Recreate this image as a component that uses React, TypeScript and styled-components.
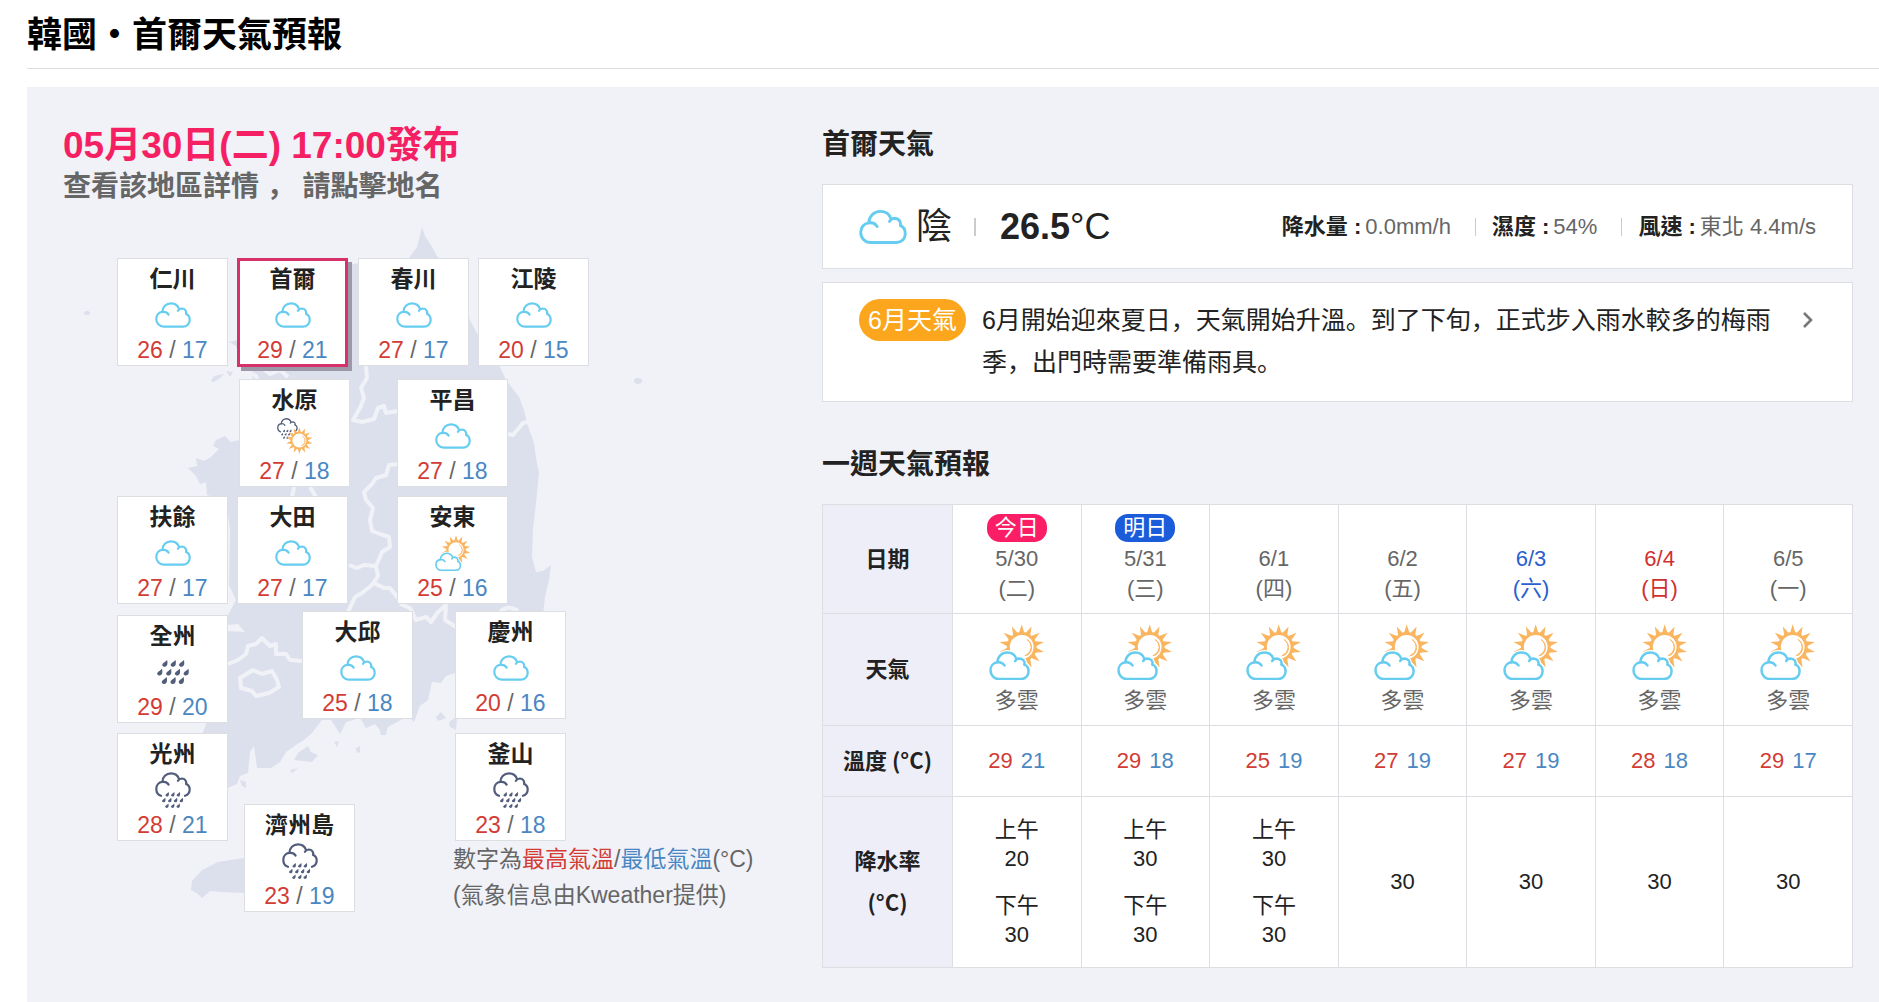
import React, { useState } from "react";
import styled, { createGlobalStyle } from "styled-components";

const GlobalStyle = createGlobalStyle`
  *, *::before, *::after { box-sizing: border-box; }
  body {
    margin: 0;
    background: #fff;
    color: #222;
    font-family: "Liberation Sans", Arial, "Noto Sans CJK TC", sans-serif;
    font-size: 22px;
    line-height: 30px;
  }
  h1, h2, h3, p, dl, dd, figure { margin: 0; }
  button { font: inherit; color: inherit; }
`;

const HIGH = "#d23c35";
const LOW = "#4a87c2";
const LINE = "#dcdee2";

const Page = styled.main`
  padding-left: 27px;
`;

const PageTitle = styled.h1`
  padding: 10px 0 14px;
  border-bottom: 1px solid ${LINE};
  margin-bottom: 18px;
  color: #000;
  font-family: "Noto Sans CJK TC", sans-serif;
  font-size: 35px;
  line-height: 44px;
`;

const Panel = styled.section`
  display: grid;
  grid-template-columns: 759px minmax(0, 1fr);
  padding: 36px 26px 77px 36px;
  background: #f1f2f8;
`;

const Issued = styled.h2`
  color: #f51f64;
  font-size: 37px;
  line-height: 46px;
`;

const Hint = styled.p`
  color: #666;
  font-family: "Liberation Sans", Arial, "Noto Sans CJK SC", sans-serif;
  font-size: 28px;
  font-weight: bold;
  line-height: 36px;
`;

const MapCanvas = styled.figure`
  position: relative;
  width: 696px;
  height: 720px;
`;

const MapDrawing = styled.svg`
  position: absolute;
  inset: 0;
  width: 100%;
  height: 100%;
`;

const CityCard = styled.button<{ $x: number; $y: number; $on: boolean }>`
  position: absolute;
  left: ${(p) => p.$x}px;
  top: ${(p) => p.$y}px;
  display: flex;
  flex-direction: column;
  align-items: center;
  gap: 4px;
  width: 111px;
  height: ${(p) => (p.$on ? 109 : 108)}px;
  padding: 6px 0 0;
  border: 1px solid ${LINE};
  background: #fff;
  cursor: pointer;
  ${(p) =>
    p.$on &&
    `padding-top: 4px;
     border: 3px solid #d63269;
     box-shadow: 4px 4px 0 #9c98aa;`}
`;

const CityName = styled.strong`
  font-size: 23px;
  line-height: 28px;
`;

const CityTemps = styled.span`
  color: #666;
  font-size: 23px;
  line-height: 26px;
`;

const High = styled.span`
  color: ${HIGH};
`;

const Low = styled.span`
  color: ${LOW};
`;

const MapNote = styled.figcaption`
  position: absolute;
  left: 390px;
  top: 636px;
  color: #666;
  font-size: 23px;
  line-height: 36px;
  white-space: nowrap;
`;

const Details = styled.div`
  display: flex;
  flex-direction: column;
`;

const SectionTitle = styled.h2`
  margin-bottom: 17px;
  font-size: 28px;
  line-height: 44px;
`;

const NowBox = styled.div`
  display: flex;
  align-items: center;
  height: 85px;
  padding: 0 36px;
  border: 1px solid ${LINE};
  background: #fff;
`;

const Sky = styled.span`
  margin-left: 9px;
  font-size: 36px;
  line-height: 44px;
`;

const Divider = styled.span`
  width: 2px;
  height: 18px;
  margin: 0 24px 0 22px;
  background: #ccc;
`;

const NowTemp = styled.span`
  font-size: 36px;
  line-height: 44px;
`;

const Facts = styled.dl`
  display: flex;
  align-items: center;
  margin-left: auto;
  font-size: 22px;
`;

const Fact = styled.div`
  display: flex;
  gap: 4px;
  white-space: nowrap;

  & + & {
    margin-left: 24px;
    padding-left: 17px;
    background: linear-gradient(#ccc, #ccc) left center / 1px 18px no-repeat;
  }
  dt { font-weight: bold; }
  dd { color: #666; }
`;

const SeasonLink = styled.a`
  display: flex;
  align-items: flex-start;
  margin: 13px 0 41px;
  padding: 16px 36px 18px;
  border: 1px solid ${LINE};
  background: #fff;
  color: #222;
  font-size: 25px;
  line-height: 42px;
  text-decoration: none;
`;

const SeasonTag = styled.span`
  flex: none;
  padding: 0 9px;
  border-radius: 21px;
  background: #fba61c;
  color: #fff;
`;

const SeasonText = styled.span`
  flex: 1;
  margin: 0 16px;
  font-family: "Liberation Sans", Arial, "Noto Sans CJK SC", sans-serif;
`;

const Chevron = styled.svg`
  flex: none;
  width: 16px;
  height: 42px;
`;

const Week = styled.table`
  width: 100%;
  border-collapse: collapse;
  table-layout: fixed;
  text-align: center;

  th, td {
    padding: 0;
    border: 1px solid ${LINE};
  }
  th {
    padding-bottom: 5px;
    background: #eeeef8;
    font-family: "Noto Sans CJK TC", sans-serif;
    line-height: 42px;
  }
  td { background: #fff; }
`;

const HeadCol = styled.col`
  width: 130px;
`;

const Row = styled.tr<{ $h: number }>`
  height: ${(p) => p.$h}px;
`;

const DayCell = styled.td<{ $tone?: "sat" | "sun" }>`
  color: ${(p) => (p.$tone === "sat" ? "#2a5fce" : p.$tone === "sun" ? "#d02f2f" : "#666")};
`;

const DayTag = styled.span<{ $color?: string }>`
  display: block;
  width: 60px;
  height: 28px;
  margin: 0 auto 2px;
  border-radius: 13px;
  background: ${(p) => p.$color ?? "transparent"};
  color: #fff;
  line-height: 28px;
`;

const Line = styled.span`
  display: block;
`;

const SkyCell = styled.td`
  color: #666;

  svg { display: block; margin: 0 auto 6px; }
`;

const WeekTemps = styled.span`
  display: flex;
  justify-content: center;
  gap: 8px;
`;

const Half = styled.span`
  display: block;
  line-height: 29px;

  & + & { margin-top: 18px; }
`;

const BLUE = "#67cdf0";
const NAVY = "#525d7c";
const ORANGE = "#f9b55f";

const CLOUD_TOP =
  "M13.6 12.6C12.2 10.4 9.9 9.5 7.4 9.9C7.4 5 11.2 1.3 16 1.3C20 1.3 22.9 3.6 24 6.9M22.9 8.8C23.8 7.2 25.2 6.5 26.9 6.5C29.8 6.6 31.6 8.9 31.2 12";
const CLOUD_BODY =
  "M7.4 9.9C3.6 10.3 1.3 13.4 1.3 16.9C1.3 21.1 4.4 24.6 8.6 24.6H28C31.9 24.6 34.7 21.7 34.7 18C34.7 15.2 33.4 12.9 31.2 12";
const CLOUD_FILL =
  "M8.6 24.6H28C31.9 24.6 34.7 21.7 34.7 18C34.7 15.2 33.4 12.9 31.2 12C31.6 8.9 29.8 6.6 26.9 6.5L24 6.9C22.9 3.6 20 1.3 16 1.3C11.2 1.3 7.4 5 7.4 9.9C3.6 10.3 1.3 13.4 1.3 16.9C1.3 21.1 4.4 24.6 8.6 24.6Z";
const RAIN_SIDES =
  "M7.4 9.9C3.6 10.3 1.3 13.4 1.3 16.9C1.3 20 3 22.7 6 23.8M30 23.8C33 22.7 34.7 20.3 34.7 17.4C34.7 14.8 33.4 12.9 31.2 12";

const CloudShape = () => (
  <g fill="none" stroke={BLUE} strokeWidth="2.2" strokeLinecap="round" strokeLinejoin="round">
    <path d={CLOUD_BODY} />
    <path d={CLOUD_TOP} />
  </g>
);

const DROPS = [
  [12.2, 22.4], [17.8, 22.4], [23.4, 22.4],
  [8.8, 28.2], [14.8, 28.2], [20.6, 28.2], [26.4, 28.2],
  [11.9, 33.8], [17.7, 33.8], [23.2, 33.8],
];

const Drops = () => (
  <g fill={NAVY}>
    {DROPS.map(([x, y]) => (
      <path
        key={`${x}-${y}`}
        transform={`translate(${x} ${y})`}
        d="M1.5 -2.4C1.8 -.8 1.9 .6 1.2 1.5C.4 2.4 -1.1 2.3 -1.7 1.3C-2.2 0 .1 -1 1.5 -2.4Z"
      />
    ))}
  </g>
);

const RainShape = () => (
  <g>
    <g fill="none" stroke={NAVY} strokeWidth="2.2" strokeLinecap="round" strokeLinejoin="round">
      <path d={RAIN_SIDES} />
      <path d={CLOUD_TOP} />
    </g>
    <Drops />
  </g>
);

const RAYS = 14;
const sunRays = Array.from({ length: RAYS }, (_, i) => {
  const point = (r: number, k: number) => {
    const a = -Math.PI / 2 + ((i + k) * 2 * Math.PI) / RAYS;
    return `${(r * Math.cos(a)).toFixed(2)} ${(r * Math.sin(a)).toFixed(2)}`;
  };
  return `M${point(14, -0.44)}L${point(22.8, 0)}L${point(14, 0.44)}Z`;
}).join("");

const SunShape = () => (
  <g>
    <path d={sunRays} fill={ORANGE} />
    <circle r="13.4" fill="#fff" stroke={ORANGE} strokeWidth="3" />
    <path
      d="M5.2 -7.6C11 -3.6 11 5 3.2 8.6C10.6 8.6 12.6 -3.6 5.2 -7.6Z"
      fill={ORANGE}
      stroke={ORANGE}
      strokeWidth=".8"
    />
  </g>
);

type Weather = "cloud" | "rain" | "drops" | "sunny" | "shower";

const WeatherIcon = ({ kind, size = 36 }: { kind: Weather; size?: number }) => {
  if (kind === "sunny")
    return (
      <svg width={size} height={size} viewBox="0 0 56 56" aria-hidden="true">
        <g transform="translate(32.7 23)"><SunShape /></g>
        <g transform="translate(0 27) scale(1.14)">
          <path d={CLOUD_FILL} fill="#fff" stroke="#fff" strokeWidth="4.4" />
          <CloudShape />
        </g>
      </svg>
    );
  if (kind === "shower")
    return (
      <svg width={size} height={size} viewBox="0 0 36 36" aria-hidden="true">
        <g transform="scale(.58)"><RainShape /></g>
        <g transform="translate(22.4 22.6) scale(.59)">
          <circle r="16.5" fill="#fff" />
          <SunShape />
        </g>
      </svg>
    );
  if (kind === "drops")
    return (
      <svg width={size} height={size} viewBox="0 0 36 36" aria-hidden="true">
        <g transform="translate(-8.4 -24) scale(1.5)"><Drops /></g>
      </svg>
    );
  if (kind === "rain")
    return (
      <svg width={size} height={size} viewBox="0 0 36 36" aria-hidden="true"><RainShape /></svg>
    );
  return (
    <svg width={size} height={size} viewBox="0 -5 36 36" aria-hidden="true"><CloudShape /></svg>
  );
};

const KoreaMap = () => (
  <MapDrawing viewBox="63 205 696 720" aria-hidden="true">
    <g fill="#dce0ec">
      <path d="M422 227L425 236L431 245L437 256L448 268L460 296L469 318L478 335L490 352L500 367L506 380L519 397L524 410L527 423L534 443L536 458L539 473L536 503L533 530L532 557L536 572L543 571L551 565L549 580L545 597L542 625L520 660L455 673L446 676L441 683L432 682L428 700L420 706L414 722L408 716L388 727L384 735L375 724L366 728L360 718L346 722L340 734L331 720L322 720L312 733L304 740L296 745L286 752L280 762L271 768L257 768L254 746L250 752L248 773L240 776L237 784L228 788L205 780L200 740L215 700L215 640L229 613L236 600L229 585L230 530L227 505L214 497L207 495L206 482L200 484L196 476L188 468L197 466L196 458L204 461L211 457L219 449L213 446L216 440L225 436L231 442L240 440L250 430L252 400L256 385L250 372L240 360L236 346L229 342L245 338L262 330L300 280L350 264L380 262L400 264L409 258L417 247L420 235Z" />
      <path d="M191 890L192 881L202 870L218 862L244 858L290 855L300 872L280 890L245 893L221 892L210 891L202 898L198 894Z" />
      <path d="M294 760L298 753L308 746L311 752L318 755L312 762L303 761Z" />
      <path d="M211 381L214 376L224 374L219 379L213 382Z" />
      <path d="M226 371L233 372L230 377Z" />
      <path d="M217 724L228 720L228 733L219 730Z" />
      <path d="M436 717L441 712L446 718L438 721Z" />
      <path d="M449 722L457 716L456 730L450 727Z" />
      <path d="M356 748L360 746L360 752L357 753Z" />
      <path d="M380 731L387 729L386 735L381 735Z" />
      <path d="M334 742L339 741L337 747Z" />
      <path d="M290 770L298 768L292 773Z" />
      <path d="M240 780L246 782L246 788L242 786Z" />
      <ellipse cx="87" cy="313" rx="3" ry="2" />
      <ellipse cx="638" cy="381" rx="4" ry="3" />
    </g>
    <g fill="none" stroke="#f1f2f8" strokeWidth="4" strokeLinejoin="round">
      <path d="M366 365L367 378L361 388L364 398L360 408L353 420L362 422L374 419L378 408L384 406L386 413L398 411" />
      <path d="M508 434L513 435L518 429L523 423L528 422" />
      <path d="M398 464L389 465L386 475L376 478L372 484L364 492L366 500L373 508L370 520L372 531L380 534L389 537L390 547L382 552L376 566L364 565L357 568L349 565" />
      <path d="M376 566L378 576L372 585L362 593L355 597L347 614" />
      <path d="M374 583L384 588L390 588L398 598" />
      <path d="M400 604L410 608L416 620L426 617L431 622L438 612L446 605L445 620L456 627" />
      <path d="M228 664L238 660L246 654L248 646L256 644L262 638L270 646L276 644L276 654L286 654L290 660L302 661" />
      <path d="M240 678L253 670L262 674L272 671L277 680L279 687L269 693L256 696L252 691L241 688Z" />
      <path d="M249 372L256 376L258 381M262 368L270 374L280 370L288 377" />
      <path d="M294 487L292 497M310 487L316 497" />
      <path d="M500 612Q508 604 518 611" />
    </g>
    <path d="M228 625L238 624L245 632L228 631Z" fill="#f1f2f8" />
  </MapDrawing>
);

type City = { name: string; x: number; y: number; icon: Weather; high: number; low: number };

const CITIES: City[] = [
  { name: "仁川", x: 54, y: 53, icon: "cloud", high: 26, low: 17 },
  { name: "首爾", x: 174, y: 53, icon: "cloud", high: 29, low: 21 },
  { name: "春川", x: 295, y: 53, icon: "cloud", high: 27, low: 17 },
  { name: "江陵", x: 415, y: 53, icon: "cloud", high: 20, low: 15 },
  { name: "水原", x: 176, y: 174, icon: "shower", high: 27, low: 18 },
  { name: "平昌", x: 334, y: 174, icon: "cloud", high: 27, low: 18 },
  { name: "扶餘", x: 54, y: 291, icon: "cloud", high: 27, low: 17 },
  { name: "大田", x: 174, y: 291, icon: "cloud", high: 27, low: 17 },
  { name: "安東", x: 334, y: 291, icon: "sunny", high: 25, low: 16 },
  { name: "全州", x: 54, y: 410, icon: "drops", high: 29, low: 20 },
  { name: "大邱", x: 239, y: 406, icon: "cloud", high: 25, low: 18 },
  { name: "慶州", x: 392, y: 406, icon: "cloud", high: 20, low: 16 },
  { name: "光州", x: 54, y: 528, icon: "rain", high: 28, low: 21 },
  { name: "釜山", x: 392, y: 528, icon: "rain", high: 23, low: 18 },
  { name: "濟州島", x: 181, y: 599, icon: "rain", high: 23, low: 19 },
];

type Day = {
  date: string;
  weekday: string;
  tone?: "sat" | "sun";
  tag?: string;
  tagColor?: string;
  high: number;
  low: number;
  rain: number[];
};

const DAYS: Day[] = [
  { date: "5/30", weekday: "(二)", tag: "今日", tagColor: "#fb1d66", high: 29, low: 21, rain: [20, 30] },
  { date: "5/31", weekday: "(三)", tag: "明日", tagColor: "#1b5cdb", high: 29, low: 18, rain: [30, 30] },
  { date: "6/1", weekday: "(四)", high: 25, low: 19, rain: [30, 30] },
  { date: "6/2", weekday: "(五)", high: 27, low: 19, rain: [30] },
  { date: "6/3", weekday: "(六)", tone: "sat", high: 27, low: 19, rain: [30] },
  { date: "6/4", weekday: "(日)", tone: "sun", high: 28, low: 18, rain: [30] },
  { date: "6/5", weekday: "(一)", high: 29, low: 17, rain: [30] },
];

export default function App() {
  const [selected, setSelected] = useState("首爾");

  return (
    <>
      <GlobalStyle />
      <Page lang="zh-Hant">
        <PageTitle>韓國‧首爾天氣預報</PageTitle>
        <Panel>
          <div>
            <Issued>05月30日(二) 17:00發布</Issued>
            <Hint lang="zh-Hans">查看該地區詳情 ， 請點擊地名</Hint>
            <MapCanvas>
              <KoreaMap />
              {CITIES.map((c) => (
                <CityCard
                  key={c.name}
                  type="button"
                  $x={c.x}
                  $y={c.y}
                  $on={c.name === selected}
                  aria-pressed={c.name === selected}
                  onClick={() => setSelected(c.name)}
                >
                  <CityName>{c.name}</CityName>
                  <WeatherIcon kind={c.icon} />
                  <CityTemps>
                    <High>{c.high}</High> / <Low>{c.low}</Low>
                  </CityTemps>
                </CityCard>
              ))}
              <MapNote>
                數字為<High>最高氣溫</High>/<Low>最低氣溫</Low>(°C)
                <br />
                (氣象信息由Kweather提供)
              </MapNote>
            </MapCanvas>
          </div>

          <Details>
            <SectionTitle>首爾天氣</SectionTitle>
            <NowBox>
              <WeatherIcon kind="cloud" size={48} />
              <Sky>陰</Sky>
              <Divider />
              <NowTemp>
                <strong>26.5</strong>°C
              </NowTemp>
              <Facts>
                <Fact>
                  <dt>降水量 :</dt>
                  <dd>0.0mm/h</dd>
                </Fact>
                <Fact>
                  <dt>濕度 :</dt>
                  <dd>54%</dd>
                </Fact>
                <Fact>
                  <dt>風速 :</dt>
                  <dd>東北 4.4m/s</dd>
                </Fact>
              </Facts>
            </NowBox>
            <SeasonLink href="#season">
              <SeasonTag>6月天氣</SeasonTag>
              <SeasonText lang="zh-Hans">
                6月開始迎來夏日，天氣開始升溫。到了下旬，正式步入雨水較多的梅雨季，出門時需要準備雨具。
              </SeasonText>
              <Chevron viewBox="0 0 16 42" aria-hidden="true">
                <path d="M4 14L11 21L4 28" fill="none" stroke="#777" strokeWidth="2.6" />
              </Chevron>
            </SeasonLink>

            <SectionTitle>一週天氣預報</SectionTitle>
            <Week>
              <colgroup>
                <HeadCol />
                {DAYS.map((d) => (
                  <col key={d.date} />
                ))}
              </colgroup>
              <tbody>
                <Row $h={109}>
                  <th scope="row">日期</th>
                  {DAYS.map((d) => (
                    <DayCell key={d.date} $tone={d.tone}>
                      <DayTag $color={d.tagColor}>{d.tag}</DayTag>
                      <Line>{d.date}</Line>
                      <Line>{d.weekday}</Line>
                    </DayCell>
                  ))}
                </Row>
                <Row $h={112}>
                  <th scope="row">天氣</th>
                  {DAYS.map((d) => (
                    <SkyCell key={d.date}>
                      <WeatherIcon kind="sunny" size={56} />
                      多雲
                    </SkyCell>
                  ))}
                </Row>
                <Row $h={71}>
                  <th scope="row">溫度 (°C)</th>
                  {DAYS.map((d) => (
                    <td key={d.date}>
                      <WeekTemps>
                        <High>{d.high}</High>
                        <Low>{d.low}</Low>
                      </WeekTemps>
                    </td>
                  ))}
                </Row>
                <Row $h={171}>
                  <th scope="row">
                    降水率
                    <br />
                    (°C)
                  </th>
                  {DAYS.map((d) => (
                    <td key={d.date}>
                      {d.rain.length === 1
                        ? d.rain[0]
                        : d.rain.map((r, i) => (
                            <Half key={i}>
                              {i === 0 ? "上午" : "下午"}
                              <br />
                              {r}
                            </Half>
                          ))}
                    </td>
                  ))}
                </Row>
              </tbody>
            </Week>
          </Details>
        </Panel>
      </Page>
    </>
  );
}
